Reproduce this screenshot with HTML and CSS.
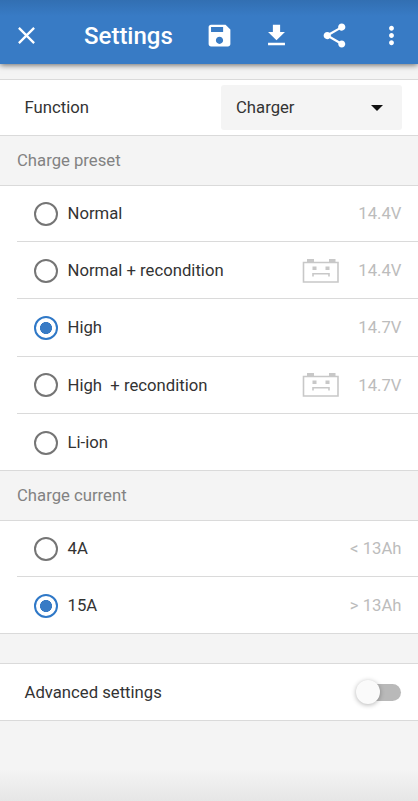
FILE: index.html
```html
<!DOCTYPE html>
<html lang="en">
<head>
  <meta charset="UTF-8">
  <meta name="viewport" content="width=device-width, initial-scale=1">
  <title>Settings</title>
  <link rel="stylesheet" href="styles.css">
</head>
<body>
  <header class="toolbar">
    <svg class="icon" viewBox="0 0 24 24"><path d="M5.700 5.700L18.300 18.300M18.300 5.700L5.700 18.300" stroke="white" stroke-width="1.900"/></svg>
    <h1>Settings</h1>
    <div class="actions">
      <svg class="icon" viewBox="0 0 24 24"><path d="M17 3H5c-1.11 0-2 .9-2 2v14c0 1.1.89 2 2 2h14c1.1 0 2-.9 2-2V7l-4-4zm-5 16c-1.66 0-3-1.34-3-3s1.34-3 3-3 3 1.34 3 3-1.34 3-3 3zm3-10H5V5h10v4z"/></svg>
      <svg class="icon" viewBox="0 0 24 24"><path d="M19 9h-4V3H9v6H5l7 7 7-7zM5 18v2h14v-2H5z"/></svg>
      <svg class="icon" viewBox="0 0 24 24"><path d="M18 16.08c-.76 0-1.44.3-1.96.77L8.91 12.7c.05-.23.09-.46.09-.7s-.04-.47-.09-.7l7.05-4.11c.54.5 1.25.81 2.04.81 1.66 0 3-1.34 3-3s-1.34-3-3-3-3 1.34-3 3c0 .24.04.47.09.7L8.04 9.81C7.5 9.31 6.79 9 6 9c-1.66 0-3 1.34-3 3s1.34 3 3 3c.79 0 1.5-.31 2.04-.81l7.12 4.16c-.05.21-.08.43-.08.65 0 1.61 1.31 2.92 2.92 2.92s2.92-1.31 2.92-2.92-1.31-2.92-2.92-2.92z"/></svg>
      <svg class="icon" viewBox="0 0 24 24"><path d="M12 8c1.1 0 2-.9 2-2s-.9-2-2-2-2 .9-2 2 .9 2 2 2zm0 2c-1.1 0-2 .9-2 2s.9 2 2 2 2-.9 2-2-.9-2-2-2zm0 6c-1.1 0-2 .9-2 2s.9 2 2 2 2-.9 2-2-.9-2-2-2z"/></svg>
    </div>
  </header>

  <main>
    <div class="panel">
      <span>Function</span>
      <button class="select" type="button">Charger <span class="caret"></span></button>
    </div>

    <h2>Charge preset</h2>
    <div class="list">
      <label class="row">
        <input type="radio" name="preset">
        <span class="name">Normal</span>
        <span class="value">14.4V</span>
      </label>
      <label class="row">
        <input type="radio" name="preset">
        <span class="name">Normal + recondition</span>
        <svg class="battery" viewBox="0 0 38 26"><path class="line" d="M1.5 4.5h34.5v19.5h-34.5zM11 18.5v-2.700h16v2.700"/><path d="M5 1h7v3H5zM27 1h6.500v3H27zM10.500 8.500h4v3.500h-4zM23.500 8.500h4v3.500h-4z"/></svg>
        <span class="value">14.4V</span>
      </label>
      <label class="row">
        <input type="radio" name="preset" checked>
        <span class="name">High</span>
        <span class="value">14.7V</span>
      </label>
      <label class="row">
        <input type="radio" name="preset">
        <span class="name">High&nbsp; + recondition</span>
        <svg class="battery" viewBox="0 0 38 26"><path class="line" d="M1.5 4.5h34.5v19.5h-34.5zM11 18.5v-2.700h16v2.700"/><path d="M5 1h7v3H5zM27 1h6.500v3H27zM10.500 8.500h4v3.500h-4zM23.500 8.500h4v3.500h-4z"/></svg>
        <span class="value">14.7V</span>
      </label>
      <label class="row">
        <input type="radio" name="preset">
        <span class="name">Li-ion</span>
      </label>
    </div>

    <h2>Charge current</h2>
    <div class="list">
      <label class="row">
        <input type="radio" name="current">
        <span class="name">4A</span>
        <span class="value">&lt; 13Ah</span>
      </label>
      <label class="row">
        <input type="radio" name="current" checked>
        <span class="name">15A</span>
        <span class="value">&gt; 13Ah</span>
      </label>
    </div>

    <label class="panel advanced">
      <span>Advanced settings</span>
      <input class="switch" type="checkbox">
    </label>
  </main>
</body>
</html>
```

FILE: styles.css
```css
* { box-sizing: border-box; }
body { margin: 0; min-height: 801px; display: flex; flex-direction: column; background: #f4f4f4; font-family: Roboto, sans-serif; font-size: 16.7px; color: #333; }
h1, h2 { margin: 0; }

.toolbar { display: flex; align-items: center; height: 64px; padding: 7px 12px 0; background: linear-gradient(#326fb2, #387bc5 16px); color: white; box-shadow: 0 1px 6px rgba(0,0,0,0.6); }
.toolbar h1 { margin-left: 43px; font-size: 24px; font-weight: 500; line-height: 28px; }
.icon { width: 29px; height: 29px; fill: white; }
.actions { display: flex; gap: 28.4px; margin: 0 0 0 auto; }

main { flex: 1; padding-top: 15px; background: linear-gradient(transparent calc(100% - 32px), #e6e6e6); }
.panel { display: flex; align-items: center; justify-content: space-between; height: 57px; padding: 0 16px 0 24.5px; background: white; border: solid #dadada; border-width: 1px 0; }
.select { display: flex; align-items: center; justify-content: space-between; width: 181px; height: 45px; padding: 0 19px 0 15px; background: #f4f4f4; border: none; border-radius: 3px; font: inherit; color: inherit; }
.caret { border: 6px solid transparent; border-top-color: #111; border-bottom: none; }

h2 { height: 49px; padding-left: 17px; font-size: 16.7px; font-weight: 400; line-height: 49px; color: #828282; }

.list { padding-left: 17px; background: white; border: solid #dadada; border-width: 1px 0; }
.row { display: flex; align-items: center; height: 57.3px; padding: 0 16.5px; border-top: 1px solid #dadada; }
.row:first-child { height: 55px; border-top: none; }
.row:not(:first-child) { padding-top: 1px; }
.name { margin-left: 10px; }
.value { margin-left: auto; color: #bcbcbc; }
.battery { width: 38px; height: 26px; margin-left: auto; fill: #c8c8c8; }
.battery .line { fill: none; stroke: #c8c8c8; stroke-width: 1.6; }
.battery + .value { margin-left: 18.5px; }

input[type="radio"] { appearance: none; flex: none; width: 24px; height: 24px; margin: 0; border: 2.5px solid #757575; border-radius: 50%; }
input[type="radio"]:checked { border-color: #2f78c7; background: radial-gradient(circle, #387bc5 5.7px, transparent 6.3px); }

.advanced { height: 58px; margin-top: 29px; }
.switch { appearance: none; display: flex; align-items: center; width: 42px; height: 17px; margin: 0 1px 0 0; border-radius: 9px; background: #b9b9b9; }
.switch::before { content: ""; width: 24px; height: 24px; margin-left: -3px; border-radius: 50%; background: #fafafa; box-shadow: 0 1px 5px rgba(0,0,0,0.3); }
```
